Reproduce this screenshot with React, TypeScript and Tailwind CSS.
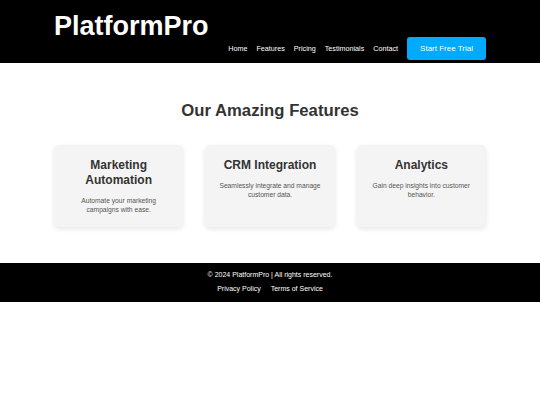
const features = [
  { title: 'Marketing Automation', text: 'Automate your marketing campaigns with ease.' },
  { title: 'CRM Integration', text: 'Seamlessly integrate and manage customer data.' },
  { title: 'Analytics', text: 'Gain deep insights into customer behavior.' },
]

const links = ['Home', 'Features', 'Pricing', 'Testimonials', 'Contact']

export default function App() {
  return (
    <div className="min-h-[405px] bg-white font-['Liberation_Sans',Arial,sans-serif]">
      <header className="bg-black">
        <div className="w-[80%] mx-auto flex justify-between items-end pt-[10px] pb-[3px]">
          <h1 className="self-start text-[27px] leading-[32px] font-bold text-white">PlatformPro</h1>
          <nav className="flex items-center gap-[9px] mt-[27px]">
            {links.map((l) => (
              <a key={l} href="#" className="text-[7.2px] leading-[10px] text-white">
                {l}
              </a>
            ))}
            <a
              href="#"
              className="h-[23px] px-[13px] flex items-center rounded-[3px] bg-[#00aaff] text-white text-[8px]"
            >
              Start Free Trial
            </a>
          </nav>
        </div>
      </header>

      <section className="pt-[38px] pb-[36px]">
        <div className="w-[80%] mx-auto">
          <h2 className="text-center text-[16.7px] leading-[20px] font-bold text-[#333] mb-[24px]">
            Our Amazing Features
          </h2>
          <div className="grid grid-cols-3 gap-[22px]">
            {features.map((f) => (
              <div
                key={f.title}
                className="bg-[#f4f4f4] rounded-[5px] p-[13px] text-center shadow-[0_2px_5px_rgba(0,0,0,0.1)]"
              >
                <h3 className="text-[12px] leading-[15px] font-bold text-[#333] mb-[7.5px]">{f.title}</h3>
                <p className="text-[6.7px] leading-[9px] text-[#555] -mx-[2px]">{f.text}</p>
              </div>
            ))}
          </div>
        </div>
      </section>

      <footer className="bg-black text-white text-center pt-[7.6px] pb-[8.4px]">
        <p className="text-[7px] leading-[10px]">© 2024 PlatformPro | All rights reserved.</p>
        <div className="mt-[4px] flex justify-center gap-[10px] text-[7px] leading-[10px]">
          <a href="#" className="text-white">Privacy Policy</a>
          <a href="#" className="text-white">Terms of Service</a>
        </div>
      </footer>
    </div>
  )
}
